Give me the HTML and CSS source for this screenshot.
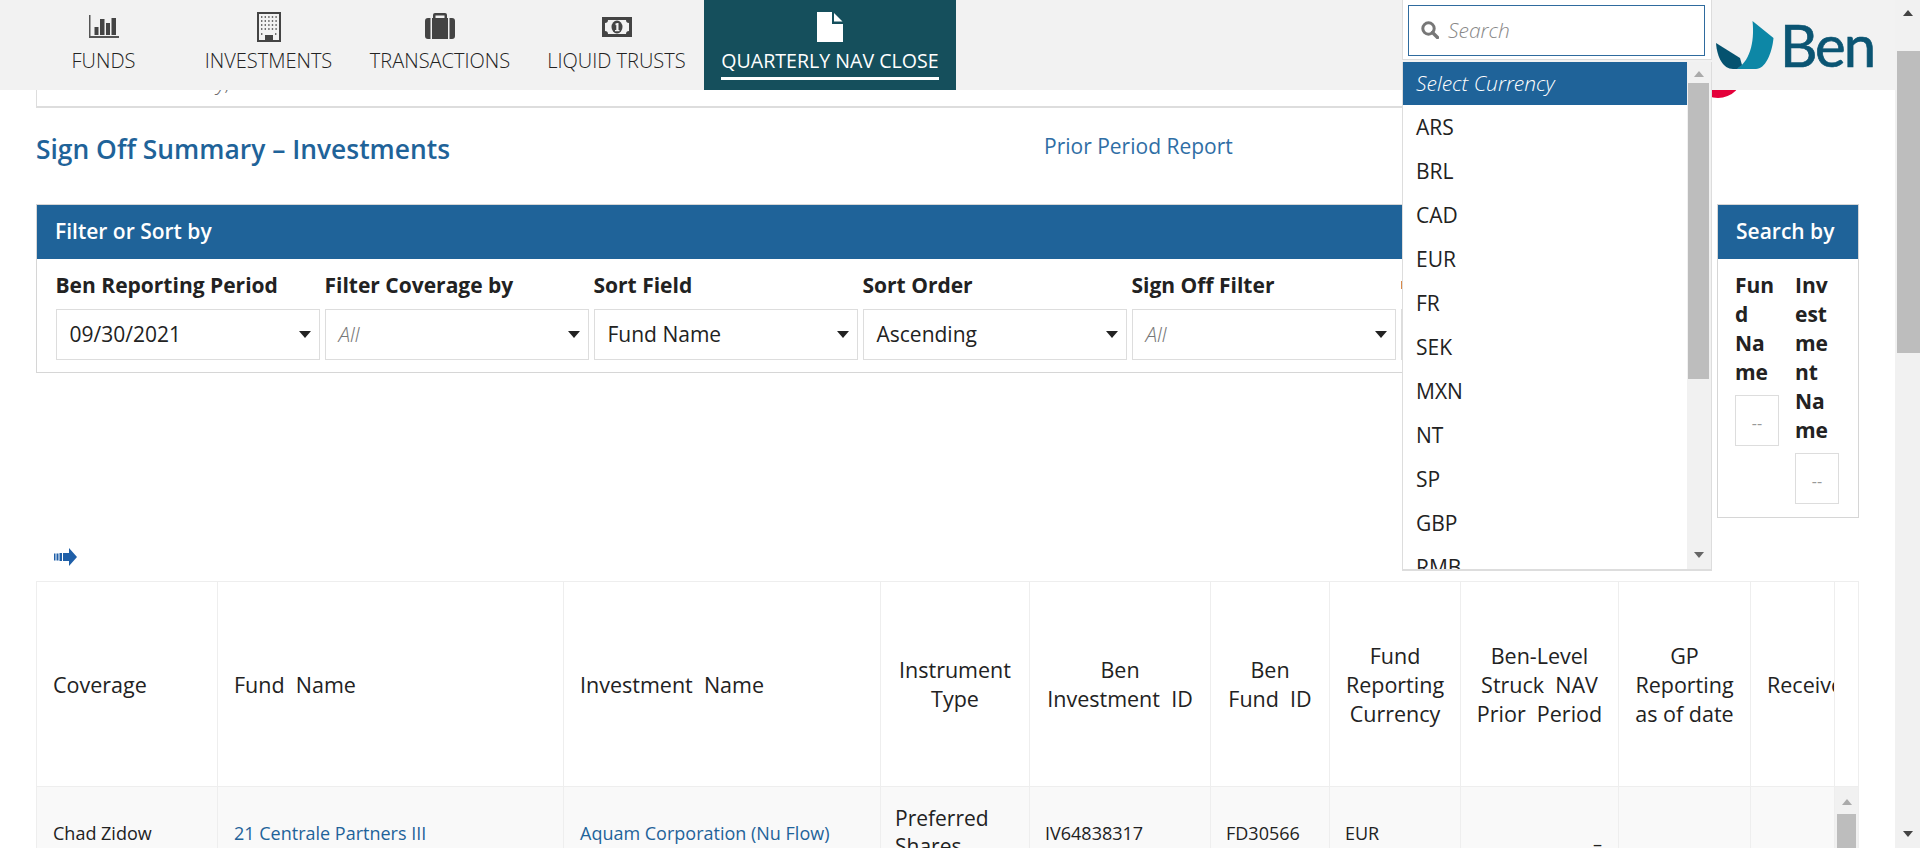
FILE: index.html
```html
<!DOCTYPE html>
<html lang="en">
<head>
    <meta charset="UTF-8">
    <title>Sign Off Summary - Investments</title>
    <link rel="stylesheet" href="styles.css">
</head>
<body>
<div class="app">
    <div class="page">
        <!-- Top navigation -->
        <header class="topbar">
            <nav class="tabs">
                <a class="tab tab-funds">
                    <svg width="30" height="24" viewBox="0 0 30 24"><path fill="#555" d="M0 0h1.5v21H30v2H0z"/><path fill="#444" d="M5.5 12h4v8h-4zM11 4h4.5v16H11zM17 8h4v12h-4zM22.5 3H27v17h-4.500z"/></svg>
                    <span>FUNDS</span>
                </a>
                <a class="tab">
                    <svg width="24" height="30" viewBox="0 0 24 30"><path fill="#444" d="M0 0h24v30H0z"/><path fill="#f2f2f2" d="M2 2h20v26h-6v-5H8v5H2z"/><path fill="#444" stroke="#444" stroke-width="1.400" stroke-dasharray="1.400 2.200" d="M4 5h17M4 9h17M4 13h17M4 17h17M4 22h2M18 22h3"/></svg>
                    <span>INVESTMENTS</span>
                </a>
                <a class="tab">
                    <svg width="30" height="26" viewBox="0 0 30 26"><path fill="#444" d="M8 5V2a2 2 0 0 1 2-2h10a2 2 0 0 1 2 2v3h-2.500V2.500h-9V5z"/><path fill="#444" d="M0 8a3 3 0 0 1 3-3h2.500v21H3a3 3 0 0 1-3-3zM7 5h16v21H7zM24.500 5H27a3 3 0 0 1 3 3v15a3 3 0 0 1-3 3h-2.500z"/></svg>
                    <span>TRANSACTIONS</span>
                </a>
                <a class="tab">
                    <svg width="30" height="20" viewBox="0 0 30 20"><path fill="#444" d="M0 0h30v20H0z"/><path fill="#f2f2f2" d="M6 3h18c0 2 1 3 3 3v8c-2 0-3 1-3 3H6c0-2-1-3-3-3V6c2 0 3-1 3-3z"/><ellipse cx="15" cy="10" rx="5.500" ry="6.500" fill="#444"/><path fill="#f2f2f2" d="M13.500 6.500l2-.5h1v7h1v1.200h-4.500V13h1.300V8l-.8.200z"/></svg>
                    <span>LIQUID TRUSTS</span>
                </a>
                <a class="tab tab-active">
                    <svg width="26" height="30" viewBox="0 0 26 30"><path fill="#fff" d="M0 0h15v12h11v18H0z"/><path fill="#fff" d="M17 1l8.500 8.500H17z"/></svg>
                    <span>QUARTERLY NAV CLOSE</span>
                </a>
            </nav>
            <div class="logo">
                <svg width="58" height="48" viewBox="0 0 58 48"><path fill="#0d87a6" d="M36.500 0L57.500 17C56 33 49 48 40 48H20C33 42 39 22 36.500 0z"/><path fill="#05526f" d="M0 22L24 37l2 7-5 4h-4C7 48 1 36 0 22z"/></svg>
                <span class="logo-text">Ben</span>
            </div>
        </header>

        <div class="status-badge"></div>
        <div class="clipped-box"><span class="clipped-text">y,</span></div>

        <div class="title-row">
            <h1 class="page-title">Sign Off Summary – Investments</h1>
            <a class="period-link">Prior Period Report</a>
        </div>

        <!-- Filters -->
        <div class="panels">
            <section class="panel panel-filter">
                <h2 class="panel-head">Filter or Sort by</h2>
                <div class="filters">
                    <div class="field"><label>Ben Reporting Period</label><div class="select">09/30/2021</div></div>
                    <div class="field"><label>Filter Coverage by</label><div class="select select-empty">All</div></div>
                    <div class="field"><label>Sort Field</label><div class="select">Fund Name</div></div>
                    <div class="field"><label>Sort Order</label><div class="select">Ascending</div></div>
                    <div class="field"><label>Sign Off Filter</label><div class="select select-empty">All</div></div>
                    <div class="field field-last"><span class="field-mark"></span><div class="select"></div></div>
                </div>
            </section>
            <section class="panel panel-search">
                <h2 class="panel-head">Search by</h2>
                <div class="search-fields">
                    <div class="search-field"><label>Fund Name</label><input type="text" placeholder="--"></div>
                    <div class="search-field"><label>Investment Name</label><input type="text" placeholder="--"></div>
                </div>
            </section>
        </div>

        <div class="arrow-row">
            <svg width="23" height="18" viewBox="0 0 23 18"><path fill="#1f5fa8" d="M14 5h1V0l8 9-8 9v-5h-1z"/><path fill="#1f5fa8" d="M0 5.500h1.500v7H0zM2.500 5.500h2v7h-2zM5.500 5h2.500v8H5.500zM9 5h6v8H9z"/></svg>
        </div>

        <!-- Sign off table -->
        <table class="summary">
            <colgroup>
                <col class="c1"><col class="c2"><col class="c3"><col class="c4"><col class="c5"><col class="c6"><col class="c7"><col class="c8"><col class="c9"><col class="c10"><col class="c11">
            </colgroup>
            <thead>
                <tr>
                    <th class="left">Coverage</th>
                    <th class="left">Fund&nbsp; Name</th>
                    <th class="left">Investment&nbsp; Name</th>
                    <th>Instrument<br>Type</th>
                    <th>Ben<br>Investment&nbsp; ID</th>
                    <th>Ben<br>Fund&nbsp; ID</th>
                    <th>Fund<br>Reporting<br>Currency</th>
                    <th>Ben-Level<br>Struck&nbsp; NAV<br>Prior&nbsp; Period</th>
                    <th>GP<br>Reporting<br>as of date</th>
                    <th class="left clip">Received</th>
                    <th></th>
                </tr>
            </thead>
            <tbody>
                <tr>
                    <td>Chad Zidow</td>
                    <td><a>21 Centrale Partners III</a></td>
                    <td><a>Aquam Corporation (Nu Flow)</a></td>
                    <td class="big">Preferred Shares</td>
                    <td>IV64838317</td>
                    <td>FD30566</td>
                    <td>EUR</td>
                    <td class="dash">–</td>
                    <td></td>
                    <td></td>
                    <td class="bar-cell">
                        <div class="scrollbar">
                            <span class="arrow-up"></span>
                            <span class="thumb"></span>
                        </div>
                    </td>
                </tr>
            </tbody>
        </table>

        <!-- Open currency menu -->
        <div class="currency-menu">
            <div class="menu-search">
                <div class="menu-input">
                    <svg width="18" height="18" viewBox="0 0 18 18"><circle cx="7.500" cy="7.500" r="5.700" fill="none" stroke="#777" stroke-width="3"/><path d="M11.500 11.500l5 5" stroke="#777" stroke-width="3.400" stroke-linecap="round"/></svg>
                    <span>Search</span>
                </div>
            </div>
            <div class="menu-list">
                <ul class="menu-items">
                    <li class="selected">Select Currency</li>
                    <li>ARS</li>
                    <li>BRL</li>
                    <li>CAD</li>
                    <li>EUR</li>
                    <li>FR</li>
                    <li>SEK</li>
                    <li>MXN</li>
                    <li>NT</li>
                    <li>SP</li>
                    <li>GBP</li>
                    <li>RMB</li>
                </ul>
                <div class="menu-scroll">
                    <span class="arrow-up"></span>
                    <span class="thumb"></span>
                    <span class="arrow-down"></span>
                </div>
            </div>
        </div>
    </div>

    <div class="page-scroll">
        <span class="arrow-up dark"></span>
        <span class="thumb"></span>
        <span class="arrow-down dark"></span>
    </div>
</div>
</body>
</html>
```

FILE: styles.css
```css
* {
    box-sizing: border-box;
}

html, body {
    margin: 0;
    height: 100%;
    overflow: hidden;
}

body {
    font-family: "Open Sans", sans-serif;
    font-size: 21px;
    color: #222;
    background: #fff;
}

.app {
    display: flex;
    height: 848px;
}

.page {
    position: relative;
    flex: 1;
    min-width: 0;
    overflow: hidden;
}

/* Top navigation */
.topbar {
    position: relative;
    z-index: 2;
    display: flex;
    height: 90px;
    background: #f2f2f2;
}

.tabs {
    display: flex;
    padding-left: 54px;
}

.tab {
    position: relative;
    display: flex;
    flex-direction: column;
    align-items: center;
    height: 90px;
    font-size: 20px;
    font-weight: 300;
    color: #222;
    white-space: nowrap;
}

.tab svg {
    display: block;
    margin-top: 12px;
}

.tab span {
    position: absolute;
    top: 45px;
    line-height: 32px;
    padding-bottom: 3px;
}

.tab-funds {
    width: 99px;
    margin-right: 34px;
}

.tab:nth-child(2) {
    width: 163px;
    margin-right: 1px;
}

.tab:nth-child(3) {
    width: 178px;
}

.tab:nth-child(4) {
    width: 175px;
}

.tab:nth-child(1) svg {
    margin-top: 15px;
}

.tab:nth-child(3) svg {
    margin-top: 13px;
}

.tab:nth-child(4) svg {
    margin-top: 17px;
}

.tab-active {
    width: 252px;
    background: #154f5c;
    color: #fff;
    font-weight: 400;
}

.tab-active span {
    font-size: 19.600px;
    border-bottom: 3px solid #fff;
    padding-bottom: 0;
}

.logo {
    position: absolute;
    left: 1716px;
    top: 21px;
    display: flex;
    align-items: flex-end;
}

.logo svg {
    display: block;
}

.logo-text {
    font-family: Lato, sans-serif;
    font-size: 58px;
    line-height: 48px;
    height: 48px;
    margin-left: 6px;
    letter-spacing: -2px;
    color: #0b5573;
    -webkit-text-stroke: 0.7px #0b5573;
}

.status-badge {
    position: absolute;
    left: 1693px;
    top: 48px;
    width: 50px;
    height: 50px;
    border-radius: 50%;
    background: #e4003a;
}

.clipped-box {
    height: 18px;
    width: 1500px;
    margin-left: 36px;
    border-left: 1px solid #ddd;
    border-bottom: 2px solid #ddd;
    overflow: hidden;
    padding-left: 180px;
}

.clipped-text {
    display: block;
    margin-top: -22px;
    line-height: 28px;
    font-style: italic;
    font-weight: 300;
    color: #666;
}

.title-row {
    display: flex;
    height: 96px;
    padding: 25px 0 0 36px;
}

.page-title {
    margin: 0;
    width: 1008px;
    font-size: 26.400px;
    line-height: 32px;
    font-weight: 600;
    color: #1f6399;
}

.period-link {
    margin-top: 1px;
    line-height: 25px;
    color: #2f6ea5;
}

/* Filter and search panels */
.panels {
    display: flex;
    align-items: flex-start;
    gap: 10px;
    padding-left: 36px;
}

.panel {
    border: 1px solid #d6d6d6;
}

.panel-filter {
    width: 1671px;
    height: 169px;
    overflow: hidden;
}

.panel-search {
    width: 142px;
    height: 314px;
}

.panel-head {
    margin: 0;
    height: 54px;
    padding-left: 18px;
    line-height: 52px;
    font-size: 21px;
    font-weight: 600;
    color: #fff;
    background: #1f6399;
}

.filters {
    display: flex;
    gap: 5px;
    padding: 12px 0 0 18.500px;
}

.field {
    width: 264px;
    flex: none;
}

.field label,
.search-field label {
    display: block;
    font-weight: 700;
    line-height: 29px;
    color: #222;
}

.field label {
    margin-bottom: 9px;
}

.field-mark {
    display: block;
    width: 3px;
    height: 8px;
    margin: 10px 0 20px;
    background: #d98a4a;
}

.select {
    position: relative;
    height: 51px;
    padding-left: 13px;
    line-height: 49px;
    border: 1px solid #ddd;
    white-space: nowrap;
}

.select::after {
    content: "";
    position: absolute;
    right: 8px;
    top: 21px;
    border-left: 6.500px solid transparent;
    border-right: 6.500px solid transparent;
    border-top: 7px solid #222;
}

.select-empty {
    font-style: italic;
    font-weight: 300;
    color: #777;
}

.search-fields {
    display: flex;
    gap: 16px;
    padding: 12px 0 0 17px;
}

.search-field {
    width: 44px;
    flex: none;
}

.search-field label {
    overflow-wrap: anywhere;
    margin-bottom: 8px;
}

.search-field input {
    display: block;
    width: 44px;
    height: 51px;
    padding: 0;
    border: 1px solid #ddd;
    text-align: center;
    font: inherit;
    outline: none;
}

.search-field input::placeholder {
    color: #999;
    font-size: 16px;
}

.arrow-row {
    height: 63px;
    padding: 30px 0 0 54px;
}

.arrow-row svg {
    display: block;
}

/* Table */
.summary {
    width: 1822px;
    margin-left: 36px;
    table-layout: fixed;
    border-collapse: collapse;
}

.c1 { width: 181px; }
.c2 { width: 346px; }
.c3 { width: 317px; }
.c4 { width: 149px; }
.c5 { width: 181px; }
.c6 { width: 119px; }
.c7 { width: 131px; }
.c8 { width: 158px; }
.c9 { width: 132px; }
.c10 { width: 84px; }
.c11 { width: 24px; }

.summary th,
.summary td {
    border: 1px solid #eee;
    padding: 0 16px;
}

.summary th {
    height: 205px;
    font-size: 21.500px;
    font-weight: 400;
    line-height: 29px;
    text-align: center;
    white-space: nowrap;
    padding: 0 12px;
}

.summary th.left {
    padding: 0 16px;
    text-align: left;
}

.summary th.clip {
    overflow: hidden;
}

.summary td {
    height: 92px;
    font-size: 18px;
    line-height: 28px;
    background: #f9f9f9;
    overflow: hidden;
}

.summary td:nth-child(n+5) {
    padding-left: 15px;
}

.summary td.big {
    font-size: 21px;
    padding: 0 8px 3px 14px;
}

.summary td.dash {
    padding: 22px 16px 0 0;
    text-align: right;
}

.summary a {
    color: #1f6399;
}

.summary td.bar-cell {
    padding: 0;
    background: #f1f1f1;
}

.scrollbar {
    display: flex;
    flex-direction: column;
    height: 92px;
}

.scrollbar .arrow-up {
    margin: 12px auto 9px;
}

.scrollbar .thumb {
    flex: 1;
    margin: 0 2px;
}

/* Currency menu */
.currency-menu {
    position: absolute;
    z-index: 3;
    left: 1402px;
    top: 0;
    width: 310px;
}

.menu-search {
    height: 60px;
    padding: 5px 6px 0 5px;
    background: #fff;
    border-left: 1px solid #ddd;
    border-right: 1px solid #ddd;
    border-bottom: 1px solid #ddd;
}

.menu-input {
    display: flex;
    align-items: center;
    gap: 9px;
    height: 51px;
    padding: 0 0 2px 12px;
    border: 1.500px solid #2f6b9e;
    font-style: italic;
    font-weight: 300;
    color: #888;
}

.menu-input svg {
    flex: none;
}

.menu-list {
    display: flex;
    height: 509px;
    margin-top: 2px;
    background: #fff;
    border-left: 1px solid #ddd;
    border-right: 1px solid #ddd;
    border-bottom: 2px solid #ddd;
    overflow: hidden;
}

.menu-items {
    flex: 1;
    margin: 0;
    padding: 0;
    list-style: none;
    overflow: hidden;
}

.menu-items li {
    height: 44px;
    padding-left: 13px;
    line-height: 44px;
}

.menu-items .selected {
    height: 43px;
    line-height: 43px;
    padding-left: 13px;
    color: #fff;
    font-style: italic;
    font-weight: 300;
    background: #1f6399;
}

.menu-scroll {
    display: flex;
    flex-direction: column;
    align-items: stretch;
    width: 24px;
    background: #f1f1f1;
}

.menu-scroll .arrow-up {
    margin: 9px auto 6px;
}

.menu-scroll .thumb {
    height: 296px;
    margin: 0 2px 0 1px;
}

.menu-scroll .arrow-down {
    margin: auto auto 11px;
}

/* Scroll bars */
.thumb {
    display: block;
    background: #bdbdbd;
}

.arrow-up,
.arrow-down {
    display: block;
    width: 0;
    height: 0;
    border-left: 5.500px solid transparent;
    border-right: 5.500px solid transparent;
}

.arrow-up {
    border-bottom: 6px solid #aaa;
}

.arrow-down {
    border-top: 6px solid #666;
}

.arrow-up.dark {
    border-bottom-color: #444;
}

.arrow-down.dark {
    border-top-color: #444;
}

.page-scroll {
    flex: none;
    display: flex;
    flex-direction: column;
    width: 25px;
    background: #f1f1f1;
}

.page-scroll .arrow-up {
    margin: 10px auto 35px;
}

.page-scroll .thumb {
    height: 302px;
    margin-left: 2px;
}

.page-scroll .arrow-down {
    margin: auto auto 11px;
}
```
